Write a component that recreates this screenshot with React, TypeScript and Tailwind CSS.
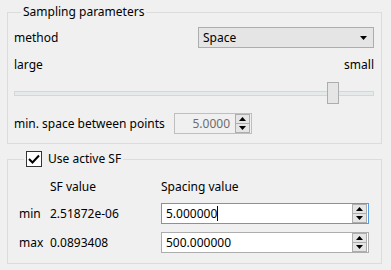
import React from 'react';

function Tri({ down = false }: { down?: boolean }) {
  return (
    <svg width="7" height="4" viewBox="0 0 7 4" className="block">
      {down ? <path d="M0 0h7L3.5 4z" fill="#000" /> : <path d="M0 4h7L3.5 0z" fill="#000" />}
    </svg>
  );
}

function SpinButtons({ border = '#adadad' }: { border?: string }) {
  return (
    <div className="flex flex-col w-[15px] h-[19px] border bg-[#e5e5e5]" style={{ borderColor: border }}>
      <div className="flex-1 flex items-center justify-center border-b" style={{ borderColor: border }}>
        <Tri />
      </div>
      <div className="flex-1 flex items-center justify-center">
        <Tri down />
      </div>
    </div>
  );
}

function SpinBox({ value, focused = false }: { value: string; focused?: boolean }) {
  return (
    <div
      className={`flex items-center w-[208px] h-[21px] bg-white border pl-[4px] pr-[1px] ${
        focused ? 'border-[#569de5]' : 'border-[#adadad]'
      }`}
    >
      <span className="flex-1 leading-[16px]">
        {value}
        {focused && <span className="inline-block w-px h-[15px] bg-black align-[-3px]" />}
      </span>
      <SpinButtons />
    </div>
  );
}

export default function App() {
  return (
    <div className="w-[391px] h-[270px] bg-[#f0f0f0] pt-[4px] px-[7px] font-['Noto_Sans',sans-serif] text-[12px] text-black">
      <fieldset className="w-[375px] border border-[#dcdcdc] pl-[6px] pr-[7px] pt-[7px] pb-[9px]">
        <legend className="ml-[7px] px-[2px] h-[16px] leading-[16px]">Sampling parameters</legend>

        <div className="flex items-center h-[21px]">
          <span>method</span>
          <div className="ml-auto w-[176px] h-[21px] flex items-center justify-between bg-[#e5e5e5] border border-[#adadad] pl-[4px] pr-[6px]">
            <span>Space</span>
            <Tri down />
          </div>
        </div>

        <div className="flex justify-between h-[16px] leading-[16px] mt-[9px]">
          <span>large</span>
          <span>small</span>
        </div>

        <div className="relative h-[22px] mt-[9px] flex items-center">
          <div className="w-full h-[5px] bg-[#e7eaea] border border-[#d6d6d6]" />
          <div className="absolute left-[313px] top-0 w-[12px] h-[22px] bg-[#e5e5e5] border border-[#adadad]" />
        </div>

        <div className="flex items-center h-[21px] mt-[9px]">
          <span className="w-[160px]">min. space between points</span>
          <div className="flex items-center w-[78px] h-[21px] border border-[#bfbfbf] pr-[1px]">
            <span className="flex-1 text-right pr-[5px] text-[#6d6d6d]">5.0000</span>
            <SpinButtons />
          </div>
        </div>
      </fieldset>

      <fieldset className="w-[375px] mt-[7px] border border-[#dcdcdc] pl-[11px] pr-[12px] pt-[12px] pb-[10px]">
        <legend className="ml-[5px] px-[2px] h-[16px] flex items-center gap-[6px]">
          <span className="w-[16px] h-[16px] bg-white border border-[#333] flex items-center justify-center">
            <svg width="12" height="10" viewBox="0 0 12 10">
              <path d="M1 5l3.5 3.5L11 1.5" fill="none" stroke="#000" strokeWidth="2" />
            </svg>
          </span>
          <span className="leading-[16px]">Use active SF</span>
        </legend>

        <div className="grid grid-cols-[31px_111px_208px] items-center gap-y-[8px]">
          <span />
          <span className="leading-[16px]">SF value</span>
          <span className="leading-[16px]">Spacing value</span>

          <span>min</span>
          <span>2.51872e-06</span>
          <SpinBox value="5.000000" focused />

          <span>max</span>
          <span>0.0893408</span>
          <SpinBox value="500.000000" />
        </div>
      </fieldset>
    </div>
  );
}
